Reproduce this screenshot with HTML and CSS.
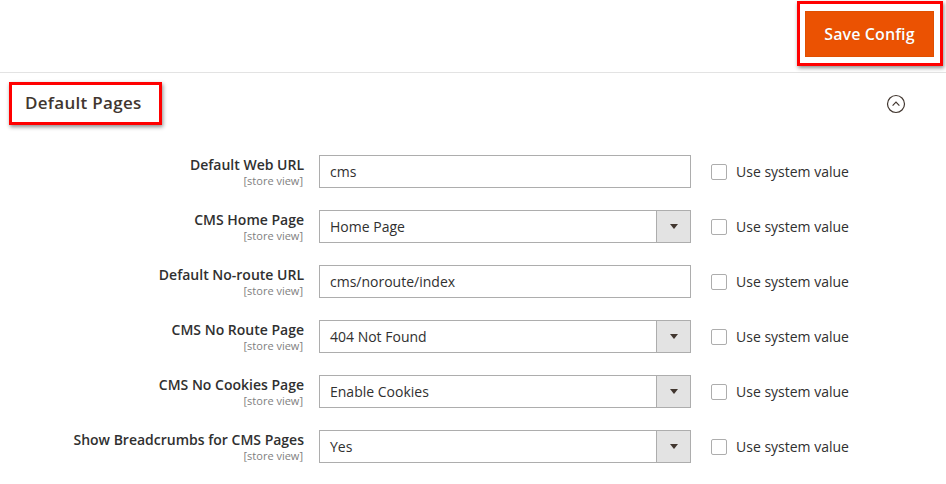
FILE: index.html
```html
<!DOCTYPE html>
<html>
<head>
<meta charset="utf-8">
<link rel="stylesheet" href="styles.css">
</head>
<body>
<div class="page-actions">
  <div class="mark mark-btn">
    <button class="save-btn">Save Config</button>
  </div>
</div>
<div class="section">
  <div class="section-head">
    <div class="mark mark-title"><span class="title">Default Pages</span></div>
    <svg class="collapse" width="20" height="20" viewBox="0 0 20 20">
      <circle cx="10" cy="10" r="8.5" fill="none" stroke="#41362f" stroke-width="1.2"/>
      <path d="M6.6 11.6 L10 8.2 L13.4 11.6" fill="none" stroke="#41362f" stroke-width="1.2"/>
    </svg>
  </div>
  <div class="rows">
    <div class="row">
      <div class="label"><span class="lt">Default Web URL</span><span class="scope">[store view]</span></div>
      <div class="control"><div class="input">cms</div></div>
      <label class="sys"><span class="cb"></span>Use system value</label>
    </div>
    <div class="row">
      <div class="label"><span class="lt">CMS Home Page</span><span class="scope">[store view]</span></div>
      <div class="control"><div class="select"><span class="val">Home Page</span><span class="arrow"></span></div></div>
      <label class="sys"><span class="cb"></span>Use system value</label>
    </div>
    <div class="row">
      <div class="label"><span class="lt">Default No-route URL</span><span class="scope">[store view]</span></div>
      <div class="control"><div class="input">cms/noroute/index</div></div>
      <label class="sys"><span class="cb"></span>Use system value</label>
    </div>
    <div class="row">
      <div class="label"><span class="lt">CMS No Route Page</span><span class="scope">[store view]</span></div>
      <div class="control"><div class="select"><span class="val">404 Not Found</span><span class="arrow"></span></div></div>
      <label class="sys"><span class="cb"></span>Use system value</label>
    </div>
    <div class="row">
      <div class="label"><span class="lt">CMS No Cookies Page</span><span class="scope">[store view]</span></div>
      <div class="control"><div class="select"><span class="val">Enable Cookies</span><span class="arrow"></span></div></div>
      <label class="sys"><span class="cb"></span>Use system value</label>
    </div>
    <div class="row">
      <div class="label"><span class="lt">Show Breadcrumbs for CMS Pages</span><span class="scope">[store view]</span></div>
      <div class="control"><div class="select"><span class="val">Yes</span><span class="arrow"></span></div></div>
      <label class="sys"><span class="cb"></span>Use system value</label>
    </div>
  </div>
</div>
</body>
</html>
```

FILE: styles.css
```css
* { box-sizing: border-box; }
html, body { margin: 0; padding: 0; background: #fff; }
body {
  font-family: "Open Sans", "Liberation Sans", sans-serif;
  color: #303030;
  width: 946px;
  height: 484px;
  overflow: hidden;
}
.page-actions {
  height: 73px;
  border-bottom: 1px solid #e3e3e3;
  display: flex;
  justify-content: flex-end;
  align-items: flex-start;
  padding: 1px 3px 0 0;
}
.mark {
  border: 3px solid #f00;
  box-shadow: 1px 2px 4px rgba(0,0,0,0.45);
  background: #fff;
}
.mark-btn {
  width: 146px;
  height: 65px;
  padding: 7px 6px 0 5px;
}
.save-btn {
  display: block;
  width: 129px;
  height: 46px;
  border: 1px solid #e04f00;
  background: #eb5202;
  color: #fff;
  font-family: "Open Sans", "Liberation Sans", sans-serif;
  font-weight: 600;
  font-size: 16px;
  letter-spacing: 0.1px;
  padding: 0;
  margin: 0;
  text-shadow: 0 0 1px rgba(0,0,0,0.2);
}
.section { padding: 0; }
.section-head {
  display: flex;
  justify-content: space-between;
  align-items: flex-start;
  padding: 9px 40px 0 9px;
  height: 82px;
}
.mark-title {
  width: 153px;
  height: 43px;
  padding: 6px 0 0 13px;
}
.title {
  font-size: 17px;
  font-weight: 600;
  color: #41362f;
  letter-spacing: 0.3px;
  line-height: 24px;
}
.collapse { margin-top: 12px; }
.rows { display: flex; flex-direction: column; gap: 22px; }
.row {
  display: flex;
  align-items: flex-start;
  height: 33px;
}
.label {
  width: 304px;
  display: flex;
  flex-direction: column;
  align-items: flex-end;
  padding-top: 0;
  margin-right: 15px;
}
.lt {
  font-size: 14px;
  font-weight: 600;
  line-height: 19px;
  color: #303030;
}
.scope {
  font-size: 11px;
  line-height: 13px;
  color: #808080;
  margin-right: 1px;
}
.control { width: 372px; margin-right: 20px; }
.input, .select {
  height: 33px;
  border: 1px solid #adadad;
  font-size: 14px;
  color: #303030;
  line-height: 31px;
  background: #fff;
}
.input { padding: 0 10px; }
.select { display: flex; justify-content: space-between; }
.val { padding-left: 10px; }
.arrow {
  width: 34px;
  height: 31px;
  background: #e3e3e3;
  border-left: 1px solid #adadad;
  position: relative;
}
.arrow::after {
  content: "";
  position: absolute;
  left: 13px;
  top: 13px;
  border-left: 4px solid transparent;
  border-right: 4px solid transparent;
  border-top: 5px solid #41362f;
}
.sys {
  display: flex;
  align-items: center;
  height: 33px;
  font-size: 14px;
  color: #303030;
}
.cb {
  width: 16px;
  height: 16px;
  border: 1px solid #adadad;
  border-radius: 2px;
  margin-right: 9px;
  background: #fff;
}
```
